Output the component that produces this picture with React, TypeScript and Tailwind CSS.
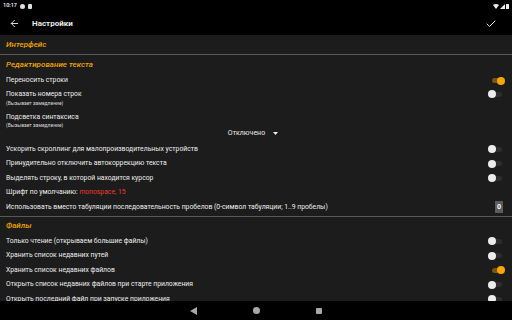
import { ArrowLeft, Check } from "lucide-react";

function Toggle({ on }: { on?: boolean }) {
  return (
    <div className="relative h-[8px] w-[12px]">
      <div
        className={`absolute left-[1px] top-[1.5px] h-[5px] w-[10px] rounded-full ${
          on ? "bg-[#7a5511]" : "bg-[#2e2e2e]"
        }`}
      />
      <div
        className={`absolute top-0 h-[8px] w-[8px] rounded-full ${
          on ? "right-[-2px] bg-[#f6a50d]" : "left-[-3px] bg-[#ececec]"
        }`}
      />
    </div>
  );
}

function Row({ label, on, noToggle }: { label: React.ReactNode; on?: boolean; noToggle?: boolean }) {
  return (
    <div className="flex h-[14.5px] items-center justify-between pl-[6px] pr-[9px]">
      <span className="text-[6.8px] leading-none text-[#ececec]">{label}</span>
      {!noToggle && <Toggle on={on} />}
    </div>
  );
}

function Header({ title, h }: { title: string; h: string }) {
  return (
    <div className={`flex items-center pl-[6px] ${h}`}>
      <span className="text-[8px] font-medium italic leading-none text-[#eda20e]">{title}</span>
    </div>
  );
}

export default function App() {
  return (
    <div className="flex h-[320px] w-[512px] flex-col bg-black font-['Roboto',sans-serif] text-white">
      {/* status bar */}
      <div className="flex h-[12px] items-center justify-between px-[3px]">
        <div className="flex items-center gap-[3px]">
          <span className="text-[5.5px] font-medium leading-none">10:17</span>
          <span className="h-[5px] w-[5px] rounded-full bg-[#ddd]" />
          <span className="h-[5px] w-[4px] rounded-[1px] bg-[#ddd]" />
        </div>
        <div className="flex items-center gap-[1px]">
          <svg width="6" height="5" viewBox="0 0 6 5">
            <path d="M0 1 Q3 -1 6 1 L3 5 Z" fill="#eee" />
          </svg>
          <svg width="5" height="5" viewBox="0 0 5 5">
            <path d="M5 0 L5 5 L0 5 Z" fill="#eee" />
          </svg>
          <span className="h-[5px] w-[3px] rounded-[0.5px] bg-[#eee]" />
        </div>
      </div>

      {/* toolbar */}
      <div className="flex h-[23px] items-center justify-between pl-[9px] pr-[15px]">
        <div className="flex items-center">
          <ArrowLeft size={11} strokeWidth={2} color="#e8e8e8" />
          <span className="ml-[12px] text-[8px] font-bold leading-none text-[#ececec]">Настройки</span>
        </div>
        <Check size={12} strokeWidth={2} color="#e8e8e8" />
      </div>

      {/* content */}
      <div className="flex-1 overflow-hidden bg-[#1c1c1c]">
        <Header title="Интерфейс" h="h-[18.5px] pt-[1px]" />
        <div className="h-[1.5px] bg-[#585858]" />
        <Header title="Редактирование текста" h="h-[18.5px] pt-[1px]" />
        <Row label="Переносить строки" on />
        <div className="flex h-[23px] items-start justify-between pl-[6px] pr-[9px] pt-[1.5px]">
          <div className="flex flex-col">
            <span className="text-[6.8px] leading-[9px] text-[#ececec]">Показать номера строк</span>
            <span className="text-[5px] leading-[9px] text-[#d8d8d8]">(Вызывает замедление)</span>
          </div>
          <div className="pt-[0.5px]">
            <Toggle />
          </div>
        </div>
        <div className="flex h-[17px] flex-col pl-[6px] pt-[1.5px]">
          <span className="text-[6.8px] leading-[9px] text-[#ececec]">Подсветка синтаксиса</span>
          <span className="text-[5px] leading-[7px] text-[#d8d8d8]">(Вызывает замедление)</span>
        </div>
        <div className="flex h-[14px] items-start justify-center gap-[8px] pr-[6px] pt-[1.5px]">
          <span className="text-[7px] leading-[7px] text-[#ececec]">Отключено</span>
          <svg width="5" height="3" viewBox="0 0 5 3" className="mt-[2px]">
            <path d="M0 0 L5 0 L2.5 3 Z" fill="#eee" />
          </svg>
        </div>
        <Row label="Ускорить скроллинг для малопроизводительных устройств" />
        <Row label="Принудительно отключить автокоррекцию текста" />
        <Row label="Выделять строку, в которой находится курсор" />
        <Row
          noToggle
          label={
            <>
              Шрифт по умолчанию: <span className="text-[#ea3a2f]">monospace, 15</span>
            </>
          }
        />
        <div className="flex h-[14.5px] items-center justify-between pl-[6px] pr-[9px]">
          <span className="text-[6.8px] leading-none text-[#ececec]">
            Использовать вместо табуляции последовательность пробелов (0-символ табуляции; 1..9 пробелы)
          </span>
          <span className="flex h-[12px] w-[8px] items-center justify-center bg-[#5c5c5c] text-[7px] font-bold leading-none">
            0
          </span>
        </div>
        <div className="mt-[1px] h-[1.5px] bg-[#585858]" />
        <Header title="Файлы" h="h-[17px]" />
        <Row label="Только чтение (открываем большие файлы)" />
        <Row label="Хранить список недавних путей" />
        <Row label="Хранить список недавних файлов" on />
        <Row label="Открыть список недавних файлов при старте приложения" />
        <Row label="Открыть последний файл при запуске приложения" />
      </div>

      {/* nav bar */}
      <div className="flex h-[19px] items-center justify-center gap-[56px]">
        <svg width="7" height="8" viewBox="0 0 7 8">
          <path d="M7 0 L7 8 L0 4 Z" fill="#a8a8a8" />
        </svg>
        <span className="h-[7px] w-[7px] rounded-full bg-[#a8a8a8]" />
        <span className="h-[6px] w-[6px] rounded-[1px] bg-[#a8a8a8]" />
      </div>
    </div>
  );
}
